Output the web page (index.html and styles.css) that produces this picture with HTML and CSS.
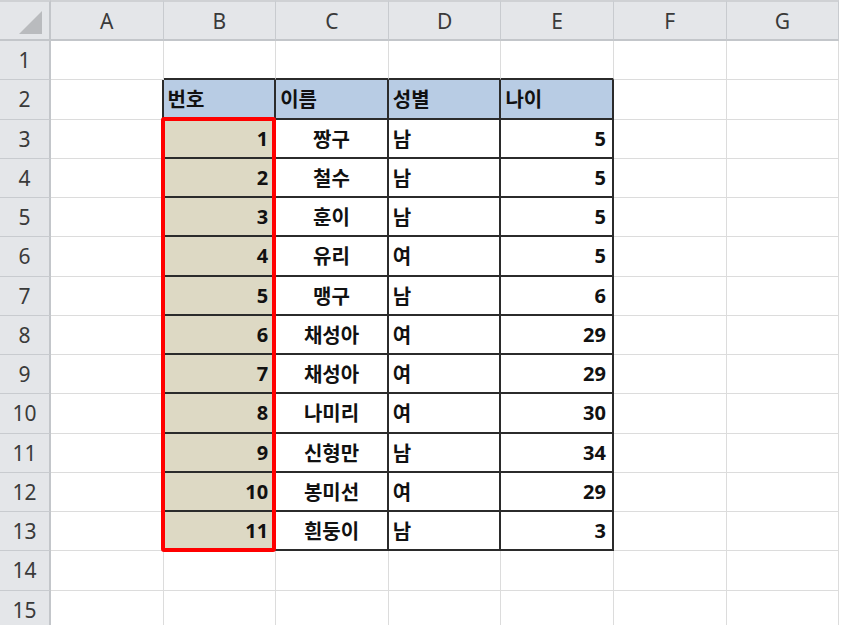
FILE: index.html
```html
<!DOCTYPE html>
<html lang="ko">
<head>
<meta charset="utf-8">
<title>Sheet</title>
<link rel="stylesheet" href="styles.css">
</head>
<body>
<div class="sheet">
  <div class="corner"><span class="tri"></span></div>
  <div class="ch">A</div><div class="ch">B</div><div class="ch">C</div><div class="ch">D</div><div class="ch">E</div><div class="ch">F</div><div class="ch">G</div>

  <div class="rh">1</div><div class="c"></div><div class="c tb"></div><div class="c tb"></div><div class="c tb"></div><div class="c tb"></div><div class="c"></div><div class="c"></div>

  <div class="rh">2</div><div class="c tl"></div><div class="c t hd">번호</div><div class="c t hd">이름</div><div class="c t hd">성별</div><div class="c t hd">나이</div><div class="c"></div><div class="c"></div>

  <div class="rh">3</div><div class="c tl"></div><div class="c t num no">1</div><div class="c t ctr">짱구</div><div class="c t lft">남</div><div class="c t num">5</div><div class="c"></div><div class="c"></div>
  <div class="rh">4</div><div class="c tl"></div><div class="c t num no">2</div><div class="c t ctr">철수</div><div class="c t lft">남</div><div class="c t num">5</div><div class="c"></div><div class="c"></div>
  <div class="rh">5</div><div class="c tl"></div><div class="c t num no">3</div><div class="c t ctr">훈이</div><div class="c t lft">남</div><div class="c t num">5</div><div class="c"></div><div class="c"></div>
  <div class="rh">6</div><div class="c tl"></div><div class="c t num no">4</div><div class="c t ctr">유리</div><div class="c t lft">여</div><div class="c t num">5</div><div class="c"></div><div class="c"></div>
  <div class="rh">7</div><div class="c tl"></div><div class="c t num no">5</div><div class="c t ctr">맹구</div><div class="c t lft">남</div><div class="c t num">6</div><div class="c"></div><div class="c"></div>
  <div class="rh">8</div><div class="c tl"></div><div class="c t num no">6</div><div class="c t ctr">채성아</div><div class="c t lft">여</div><div class="c t num">29</div><div class="c"></div><div class="c"></div>
  <div class="rh">9</div><div class="c tl"></div><div class="c t num no">7</div><div class="c t ctr">채성아</div><div class="c t lft">여</div><div class="c t num">29</div><div class="c"></div><div class="c"></div>
  <div class="rh">10</div><div class="c tl"></div><div class="c t num no">8</div><div class="c t ctr">나미리</div><div class="c t lft">여</div><div class="c t num">30</div><div class="c"></div><div class="c"></div>
  <div class="rh">11</div><div class="c tl"></div><div class="c t num no">9</div><div class="c t ctr">신형만</div><div class="c t lft">남</div><div class="c t num">34</div><div class="c"></div><div class="c"></div>
  <div class="rh">12</div><div class="c tl"></div><div class="c t num no">10</div><div class="c t ctr">봉미선</div><div class="c t lft">여</div><div class="c t num">29</div><div class="c"></div><div class="c"></div>
  <div class="rh">13</div><div class="c tl"></div><div class="c t num no">11</div><div class="c t ctr">흰둥이</div><div class="c t lft">남</div><div class="c t num">3</div><div class="c"></div><div class="c"></div>

  <div class="rh">14</div><div class="c"></div><div class="c"></div><div class="c"></div><div class="c"></div><div class="c"></div><div class="c"></div><div class="c"></div>
  <div class="rh">15</div><div class="c"></div><div class="c"></div><div class="c"></div><div class="c"></div><div class="c"></div><div class="c"></div><div class="c"></div>

  <div class="mark"></div>
</div>
</body>
</html>
```

FILE: styles.css
```css
html, body {
  margin: 0;
  padding: 0;
  background: #ffffff;
  overflow: hidden;
}

.sheet {
  position: relative;
  display: grid;
  grid-template-columns: 51px repeat(7, 112.6px);
  grid-template-rows: 41px repeat(15, 39.25px);
  width: 841px;
  height: 625px;
  overflow: hidden;
}

.sheet > div {
  box-sizing: border-box;
}

.corner {
  background: #e4e6e9;
  border-right: 2px solid #c3c6ca;
  border-bottom: 2px solid #c3c6ca;
  border-top: 2px solid #cfd1d4;
  position: relative;
}

.tri {
  position: absolute;
  right: 7px;
  bottom: 5px;
  width: 0;
  height: 0;
  border-left: 23px solid transparent;
  border-bottom: 23px solid #b9bbbe;
}

.ch {
  background: #e4e6e9;
  border-top: 2px solid #cfd1d4;
  border-right: 1px solid #c8cbcf;
  border-bottom: 2px solid #c3c6ca;
  display: flex;
  align-items: center;
  justify-content: center;
  font-family: "Noto Sans", "Liberation Sans", sans-serif;
  font-size: 21px;
  color: #3a3a3a;
}

.rh {
  background: #e4e6e9;
  border-right: 2px solid #c3c6ca;
  border-bottom: 1px solid #c8cbcf;
  display: flex;
  align-items: center;
  justify-content: center;
  font-family: "Noto Sans", "Liberation Sans", sans-serif;
  font-size: 21px;
  color: #3a3a3a;
}

.c {
  border-right: 1px solid #dcdcdc;
  border-bottom: 1px solid #dcdcdc;
  display: flex;
  align-items: center;
  font-family: "Noto Sans", "Noto Sans CJK KR", sans-serif;
  font-weight: 700;
  font-size: 20px;
  color: #111111;
  padding: 0 6px;
}

.c.tb {
  border-bottom: 2px solid #2b2b2b;
}

.c.tl {
  border-right: 2px solid #2b2b2b;
}

.c.t {
  border-right: 2px solid #2b2b2b;
  border-bottom: 2px solid #2b2b2b;
}

.hd {
  background: #b8cce4;
  justify-content: flex-start;
  font-family: "Noto Sans CJK KR", sans-serif;
  padding-left: 4px;
}

.no {
  background: #ddd9c4;
}

.num {
  justify-content: flex-end;
}

.ctr {
  justify-content: center;
  font-family: "Noto Sans CJK KR", sans-serif;
}

.lft {
  justify-content: flex-start;
  font-family: "Noto Sans CJK KR", sans-serif;
  padding-left: 4px;
}

.mark {
  position: absolute;
  grid-column: 3 / 4;
  grid-row: 4 / 15;
  top: -3px;
  left: -3px;
  right: 0;
  bottom: -1px;
  border: 4px solid #ff0000;
  border-radius: 3px;
  z-index: 2;
  pointer-events: none;
}
```
